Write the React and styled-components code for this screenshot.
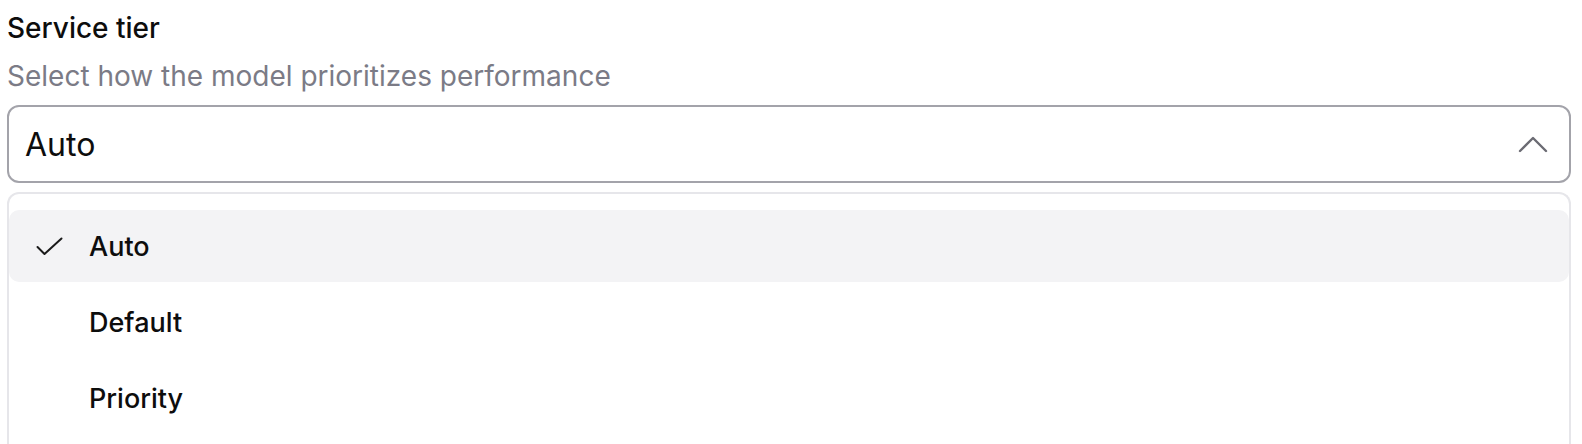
import React from 'react';
import styled, { createGlobalStyle } from 'styled-components';

const GlobalStyle = createGlobalStyle`
  body {
    margin: 0;
    background: #ffffff;
    font-family: Inter, "Noto Sans", sans-serif;
    color: #0d0d0d;
  }
`;

const Field = styled.div`
  padding: 10px 11px 0 7px;
  display: flex;
  flex-direction: column;
`;

const Label = styled.div`
  font-size: 28px;
  font-weight: 450;
  line-height: 36px;
`;

const Hint = styled.div`
  margin-top: 12px;
  font-size: 28px;
  line-height: 36px;
  color: #7b7b86;
`;

const Trigger = styled.div`
  margin-top: 11px;
  height: 78px;
  box-sizing: border-box;
  border: 2px solid #a3a3aa;
  border-radius: 12px;
  display: flex;
  align-items: center;
  justify-content: space-between;
  padding: 0 21px 0 16px;
  font-size: 32px;
`;

const Menu = styled.div`
  margin-top: 9px;
  border: 2px solid #e6e6ea;
  border-bottom: none;
  border-radius: 12px 12px 0 0;
  padding: 16px 0 0;
  display: flex;
  flex-direction: column;
  gap: 4px;
  height: 300px;
  box-sizing: border-box;
`;

const Option = styled.div`
  height: 72px;
  border-radius: 10px;
  display: flex;
  align-items: center;
  background: ${p => (p.$active ? '#f3f3f5' : 'transparent')};
  font-size: 27px;
  font-weight: 500;
`;

const CheckSlot = styled.span`
  width: 80px;
  display: flex;
  justify-content: flex-end;
  padding-right: 26px;
  box-sizing: border-box;
`;

const Chevron = () => (
  <svg width="30" height="18" viewBox="0 0 30 18" fill="none">
    <path d="M2 16 L15 3 L28 16" stroke="#6b6b73" strokeWidth="2.4" strokeLinecap="round" strokeLinejoin="round" />
  </svg>
);

const Check = () => (
  <svg width="27" height="19" viewBox="0 0 27 19" fill="none">
    <path d="M1.5 10 L8.5 17 L25.5 1.5" stroke="#1a1a1a" strokeWidth="2" strokeLinecap="round" strokeLinejoin="round" />
  </svg>
);

const options = ['Auto', 'Default', 'Priority'];

export default function App() {
  return (
    <>
      <GlobalStyle />
      <Field>
        <Label>Service tier</Label>
        <Hint>Select how the model prioritizes performance</Hint>
        <Trigger>
          <span>Auto</span>
          <Chevron />
        </Trigger>
        <Menu>
          {options.map(o => (
            <Option key={o} $active={o === 'Auto'}>
              <CheckSlot>{o === 'Auto' && <Check />}</CheckSlot>
              {o}
            </Option>
          ))}
        </Menu>
      </Field>
    </>
  );
}
